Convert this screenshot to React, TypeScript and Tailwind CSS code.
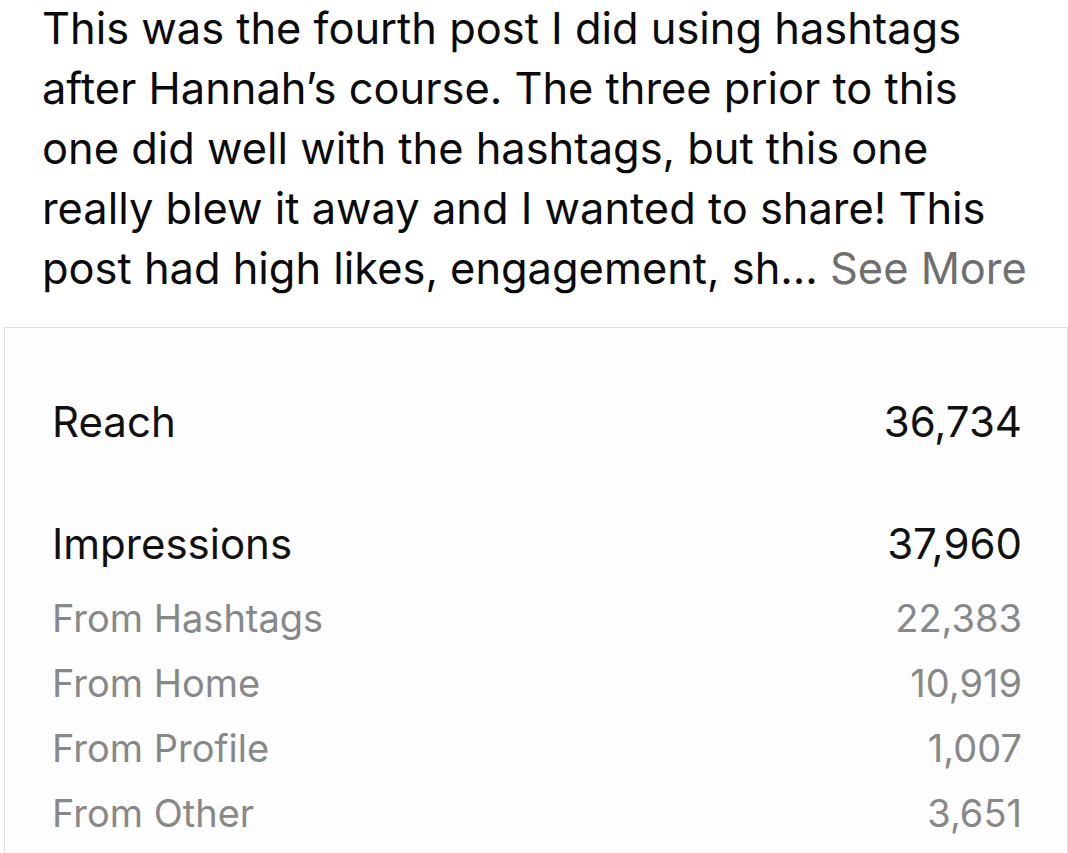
import React from "react";

const rows = [
  { label: "From Hashtags", value: "22,383" },
  { label: "From Home", value: "10,919" },
  { label: "From Profile", value: "1,007" },
  { label: "From Other", value: "3,651" },
];

const lines = [
  "This was the fourth post I did using hashtags",
  "after Hannah’s course. The three prior to this",
  "one did well with the hashtags, but this one",
  "really blew it away and I wanted to share! This",
];

export default function App() {
  return (
    <div className="w-[1068px] h-[853px] overflow-hidden bg-white" style={{ fontFamily: 'Inter, "Liberation Sans", Arial, sans-serif' }}>
      <div className="pl-[42px] text-[43.4px] leading-[60px] text-[#0a0a0a] -mt-[2px] whitespace-nowrap">
        {lines.map((l) => (
          <div key={l}>{l}</div>
        ))}
        <div>
          post had high likes, engagement, sh... <span className="text-[#6f6f6f]">See More</span>
        </div>
      </div>
      <div className="ml-[4px] mt-[29px] h-[600px] border border-[#dedede] bg-[#fdfdfd] pl-[47px] pr-[45px]">
        <div className="flex justify-between pt-[64px] text-[42px] leading-[60px] text-[#111]">
          <span>Reach</span>
          <span>36,734</span>
        </div>
        <div className="flex justify-between mt-[62px] text-[42px] leading-[60px] text-[#111]">
          <span>Impressions</span>
          <span>37,960</span>
        </div>
        <div className="mt-[12px] flex flex-col">
          {rows.map((r) => (
            <div key={r.label} className="flex justify-between text-[38px] leading-[65px] text-[#888888]">
              <span>{r.label}</span>
              <span>{r.value}</span>
            </div>
          ))}
        </div>
      </div>
    </div>
  );
}
